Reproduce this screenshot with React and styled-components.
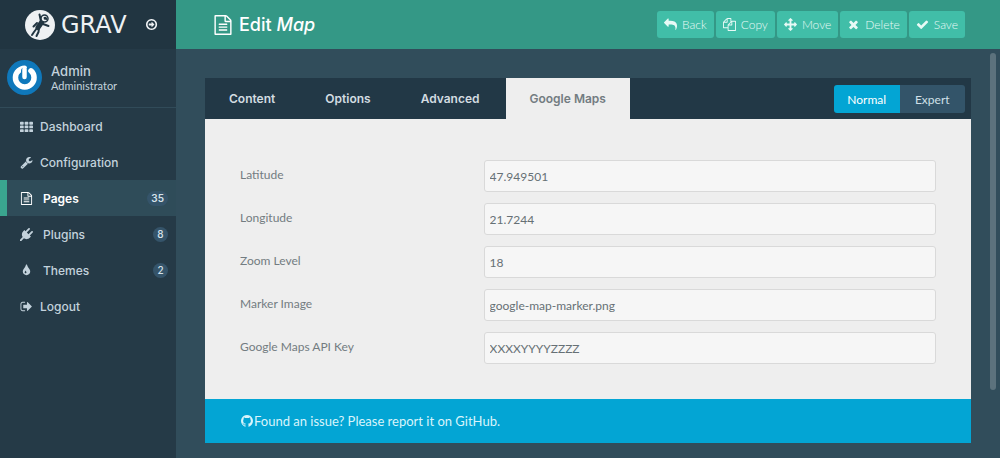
import React from "react";
import styled, { createGlobalStyle, css } from "styled-components";

const display = `Inter, "Open Sans", sans-serif`;
const body = `Lato, "Open Sans", sans-serif`;

const GlobalStyle = createGlobalStyle`
  *, *::before, *::after { box-sizing: border-box; }
  html, body { margin: 0; }
  body { background: #314d5b; font-family: ${body}; font-size: 13px; }
  button, input { font: inherit; }
`;

const paths = {
  th: "M96 256h320q96 0 96 96v192q0 96-96 96H96q-96 0-96-96V352q0-96 96-96zm640 0h320q96 0 96 96v192q0 96-96 96H736q-96 0-96-96V352q0-96 96-96zm640 0h320q96 0 96 96v192q0 96-96 96h-320q-96 0-96-96V352q0-96 96-96zM96 768h320q96 0 96 96v192q0 96-96 96H96q-96 0-96-96V864q0-96 96-96zm640 0h320q96 0 96 96v192q0 96-96 96H736q-96 0-96-96V864q0-96 96-96zm640 0h320q96 0 96 96v192q0 96-96 96h-320q-96 0-96-96V864q0-96 96-96zM96 1280h320q96 0 96 96v192q0 96-96 96H96q-96 0-96-96v-192q0-96 96-96zm640 0h320q96 0 96 96v192q0 96-96 96H736q-96 0-96-96v-192q0-96 96-96zm640 0h320q96 0 96 96v192q0 96-96 96h-320q-96 0-96-96v-192q0-96 96-96z",
  wrench: "M448 1472q0-26-19-45t-45-19-45 19-19 45 19 45 45 19 45-19 19-45zm644-420l-682 682q-37 37-90 37-52 0-91-37l-106-108q-38-36-38-90 0-53 38-91l681-681q39 98 114.500 173.500t173.500 114.500zm634-435q0 39-23 106-47 134-164.500 217.500t-258.500 83.500q-185 0-316.500-131.500t-131.500-316.500 131.500-316.500 316.500-131.500q58 0 121.500 16.500t107.500 46.500q16 11 16 28t-16 28l-293 169v224l193 107q5-3 79-48.500t135.500-81 70.500-35.500q15 0 23.500 10t8.500 25z",
  file: "M1596 380q28 28 48 76t20 88v1152q0 40-28 68t-68 28h-1344q-40 0-68-28t-28-68v-1600q0-40 28-68t68-28h896q40 0 88 20t76 48zm-444-244v376h376q-10-29-22-41l-313-313q-12-12-41-22zm384 1528v-1024h-416q-40 0-68-28t-28-68v-416h-768v1536h1280zm-1024-864q0-14 9-23t23-9h704q14 0 23 9t9 23v64q0 14-9 23t-23 9h-704q-14 0-23-9t-9-23v-64zm736 224q14 0 23 9t9 23v64q0 14-9 23t-23 9h-704q-14 0-23-9t-9-23v-64q0-14 9-23t23-9h704zm0 256q14 0 23 9t9 23v64q0 14-9 23t-23 9h-704q-14 0-23-9t-9-23v-64q0-14 9-23t23-9h704z",
  plug: "M1755 453q37 38 37 90.500t-37 90.500l-401 400 150 150-160 160q-163 163-389.500 186.500t-411.500-100.500l-362 362h-181v-181l362-362q-124-185-100.500-411.500t186.500-389.500l160-160 150 150 400-401q38-37 91-37t90 37 37 90.500-37 90.500l-400 401 234 234 401-400q38-37 91-37t90 37z",
  tint: "M896 1152q0-36-20-69-1-1-15.500-22.500t-25.500-38-25-44-21-50.500q-4-16-21-16t-21 16q-7 23-21 50.500t-25 44-25.500 38-15.500 22.500q-20 33-20 69 0 53 37.500 90.500t90.500 37.500 90.500-37.500 37.500-90.500zm512-128q0 212-150 362t-362 150-362-150-150-362q0-145 81-275 6-9 62.500-90.500t101-151 99.500-178 83-201.500q9-30 34-47t51-17 51.500 17 33.500 47q28 93 83 201.500t99.500 178 101 151 62.500 90.500q81 127 81 275z",
  signOut: "M704 1440q0 4 1 20t.5 26.500-3 23.500-10 19.500-20.500 6.500h-320q-119 0-203.500-84.500t-84.500-203.500v-704q0-119 84.500-203.500t203.500-84.500h320q13 0 22.500 9.500t9.500 22.500q0 4 1 20t.5 26.500-3 23.500-10 19.500-20.500 6.500h-320q-66 0-113 47t-47 113v704q0 66 47 113t113 47h312l11.500 1 11.500 3 8 5.500 7 9 2 13.500zm928-544q0 26-19 45l-544 544q-19 19-45 19t-45-19-19-45v-288h-448q-26 0-45-19t-19-45v-384q0-26 19-45t45-19h448v-288q0-26 19-45t45-19 45 19l544 544q19 19 19 45z",
  arrowCircle: "M1285 896q0 14-9 23l-320 320q-9 9-23 9-13 0-22.500-9.500t-9.500-22.500v-192h-352q-13 0-22.500-9.500t-9.500-22.500v-192q0-13 9.500-22.500t22.500-9.500h352v-192q0-14 9-23t23-9q12 0 24 10l319 319q9 9 9 23zm160 0q0-148-73-273t-198-198-273-73-273 73-198 198-73 273 73 273 198 198 273 73 273-73 198-198 73-273zm224 0q0 209-103 385.500t-279.500 279.500-385.500 103-385.500-103-279.500-279.500-103-385.500 103-385.500 279.500-279.500 385.500-103 385.500 103 279.500 279.500 103 385.500z",
  doubleLeft: "M1011 1376q0 13-10 23l-50 50q-10 10-23 10t-23-10l-466-466q-10-10-10-23t10-23l466-466q10-10 23-10t23 10l50 50q10 10 10 23t-10 23l-393 393 393 393q10 10 10 23zm384 0q0 13-10 23l-50 50q-10 10-23 10t-23-10l-466-466q-10-10-10-23t10-23l466-466q10-10 23-10t23 10l50 50q10 10 10 23t-10 23l-393 393 393 393q10 10 10 23z",
  reply: "M1792 1120q0 166-127 451-3 7-10.500 23.500t-13.500 29.500-12 23q-12 17-28 17-15 0-23.500-10t-8.500-25q0-9 2.500-26.500t2.500-23.500q5-68 5-123 0-101-17.500-181t-48.500-138.500-80-101-105.500-69.500-133-42.500-154-21.500-175.500-6h-224v256q0 26-19 45t-45 19-45-19l-512-512q-19-19-19-45t19-45l512-512q19-19 45-19t45 19 19 45v256h224q713 0 875 403 53 134 53 333z",
  copy: "M1696 384q40 0 68 28t28 68v1216q0 40-28 68t-68 28h-960q-40 0-68-28t-28-68v-288h-544q-40 0-68-28t-28-68v-672q0-40 20-88t48-76l408-408q28-28 76-48t88-20h416q40 0 68 28t28 68v328q68-40 128-40h416zm-544 213l-299 299h299v-299zm-640-384l-299 299h299v-299zm196 647l316-316v-416h-384v416q0 40-28 68t-68 28h-416v640h512v-256q0-40 20-88t48-76zm956 804v-1152h-384v416q0 40-28 68t-68 28h-416v640h896z",
  move: "M1792 896q0 26-19 45l-256 256q-19 19-45 19t-45-19-19-45v-128h-384v384h128q26 0 45 19t19 45-19 45l-256 256q-19 19-45 19t-45-19l-256-256q-19-19-19-45t19-45 45-19h128v-384h-384v128q0 26-19 45t-45 19-45-19l-256-256q-19-19-19-45t19-45l256-256q19-19 45-19t45 19 19 45v128h384v-384h-128q-26 0-45-19t-19-45 19-45l256-256q19-19 45-19t45 19l256 256q19 19 19 45t-19 45-45 19h-128v384h384v-128q0-26 19-45t45-19 45 19l256 256q19 19 19 45z",
  close: "M1490 1322q0 40-28 68l-136 136q-28 28-68 28t-68-28l-294-294-294 294q-28 28-68 28t-68-28l-136-136q-28-28-28-68t28-68l294-294-294-294q-28-28-28-68t28-68l136-136q28-28 68-28t68 28l294 294 294-294q28-28 68-28t68 28l136 136q28 28 28 68t-28 68l-294 294 294 294q28 28 28 68z",
  check: "M1671 566q0 40-28 68l-724 724-136 136q-28 28-68 28t-68-28l-136-136-362-362q-28-28-28-68t28-68l136-136q28-28 68-28t68 28l294 295 656-657q28-28 68-28t68 28l136 136q28 28 28 68z",
  github: "M896 128q209 0 385.500 103t279.500 279.500 103 385.500q0 251-146.500 451.500t-378.500 277.500q-27 5-40-7t-13-30q0-3 .5-76.500t.5-134.500q0-97-52-142 57-6 102.500-18t94-39 81-66.500 53-105 20.500-150.500q0-119-79-206 37-91-8-204-28-9-81 11t-92 44l-38 24q-93-26-192-26t-192 26q-16-11-42.500-27t-83.500-38.500-85-13.500q-45 113-8 204-79 87-79 206 0 85 20.500 150t52.500 105 80.500 67 94 39 102.500 18q-39 36-49 103-21 10-45 15t-57 5-65.500-21.500-55.500-62.500q-19-32-48.500-52t-49.500-24l-20-3q-21 0-29 4.500t-5 11.500 9 14 13 12l7 5q22 10 43.500 38t31.500 51l10 23q13 38 44 61.500t67 30 69.500 7 55.500-3.500l23-4q0 38 .5 88.500t.5 54.500q0 18-13 30t-40 7q-232-77-378.500-277.500t-146.500-451.500q0-209 103-385.500t279.500-279.500 385.500-103z",
};

const Glyph = styled.svg`
  display: block;
  flex: none;
  width: ${(p) => p.$size}px;
  height: ${(p) => p.$size}px;
  fill: currentColor;
`;

const Icon = ({ name, size = 13 }) => (
  <Glyph $size={size} viewBox="0 0 1792 1792" aria-hidden="true">
    <path d={paths[name]} />
  </Glyph>
);

const Shell = styled.div`
  display: grid;
  grid-template-columns: 176px 1fr;
  min-height: 100vh;
`;

const Sidebar = styled.aside`
  background: #253a47;
  color: #c3d2dc;
`;

const Brand = styled.div`
  position: relative;
  display: flex;
  align-items: center;
  height: 49px;
  padding-left: 25px;
  background: #213541;
  color: #eef1f3;
`;

const Astronaut = styled.svg`
  flex: none;
  width: 30px;
  height: 30px;
`;

const Wordmark = styled.span`
  width: 84px;
  padding-left: 6px;
  font-family: "DejaVu Sans", sans-serif;
  font-size: 24px;
  line-height: 24px;
`;

const BrandLink = styled.a`
  margin-left: 6px;
  color: inherit;
`;

const Collapse = styled.button`
  position: absolute;
  top: 15px;
  left: 176px;
  display: grid;
  place-items: center;
  width: 12px;
  height: 18px;
  padding: 0;
  border: 0;
  border-radius: 0 3px 3px 0;
  background: #213541;
  color: #d5dde2;
`;

const Profile = styled.div`
  display: flex;
  align-items: center;
  gap: 9px;
  height: 59px;
  padding: 0 7px 2px;
  border-bottom: 1px solid #314b59;
`;

const Avatar = styled.svg`
  flex: none;
  width: 35px;
  height: 35px;
`;

const ProfileName = styled.div`
  font-family: ${display};
  font-size: 13px;
  font-weight: 500;
  line-height: 16px;
`;

const ProfileRole = styled.div`
  font-size: 11px;
  line-height: 13px;
`;

const NavItem = styled.a`
  display: flex;
  align-items: center;
  height: 36px;
  padding: 0 8px 0 20px;
  color: inherit;
  font-family: ${display};
  font-size: 12px;
  font-weight: 500;
  text-decoration: none;
  ${(p) => p.$active && css`
    padding-left: 13px;
    border-left: 7px solid #3aa58f;
    background: #2f4c59;
    color: #fff;
    font-weight: 600;
  `}
`;

const NavText = styled.span`
  flex: 1;
  padding-left: ${(p) => (p.$wide ? 10 : 7)}px;
`;

const Badge = styled.span`
  min-width: 15px;
  padding: 0 4px;
  border-radius: 8px;
  background: #35546a;
  color: #d5e2ea;
  font-size: 10px;
  line-height: 15px;
  text-align: center;
`;

const Main = styled.main`
  min-width: 0;
  position: relative;
`;

const TitleBar = styled.header`
  display: flex;
  align-items: center;
  justify-content: space-between;
  height: 49px;
  padding: 0 35px 0 37px;
  background: #349886;
  color: #fff;
`;

const Title = styled.h1`
  display: flex;
  align-items: center;
  gap: 6px;
  margin: 0;
  font-family: ${display};
  font-size: 18px;
  font-weight: 500;
`;

const Actions = styled.div`
  display: flex;
  gap: 2px;
`;

const ActionButton = styled.button`
  display: flex;
  align-items: center;
  gap: 5px;
  height: 27px;
  padding: 0 7px;
  border: 0;
  border-radius: 3px;
  background: #41bea8;
  color: #e8faf6;
  font-size: 12px;
  font-weight: 300;
`;

const Panel = styled.form`
  margin: 29px 29px 15px;
  background: #eee;
`;

const TabBar = styled.div`
  display: flex;
  align-items: center;
  gap: 2px;
  height: 41px;
  padding-right: 6px;
  background: #223846;
`;

const Tab = styled.button`
  height: 41px;
  padding: 0 24px;
  border: 0;
  background: ${(p) => (p.$active ? "#eee" : "transparent")};
  color: ${(p) => (p.$active ? "#737c81" : "#d3dce1")};
  font-family: ${display};
  font-size: 12px;
  font-weight: 600;
`;

const ModeSwitch = styled.div`
  display: grid;
  grid-template-columns: 1fr 1fr;
  width: 131px;
  height: 28px;
  margin-left: auto;
  overflow: hidden;
  border-radius: 3px;
`;

const Mode = styled.button`
  padding: 2px 0 0;
  border: 0;
  background: ${(p) => (p.$active ? "#03a5d4" : "#335469")};
  color: ${(p) => (p.$active ? "#fff" : "#d0e0e8")};
  font-size: 12px;
`;

const Fields = styled.div`
  display: grid;
  gap: 11px;
  padding: 41px 35px 35px;
`;

const Field = styled.div`
  display: grid;
  grid-template-columns: 35% 65%;
  align-items: start;
`;

const Label = styled.label`
  color: #737c81;
  font-size: 12px;
  line-height: 30px;
`;

const Input = styled.input`
  width: 100%;
  height: 32px;
  padding: 1px 5px 0;
  border: 1px solid #d9d9d9;
  border-radius: 3px;
  background: #f6f6f6;
  color: #667075;
  font-size: 12px;
`;

const Notice = styled.a`
  display: flex;
  align-items: center;
  height: 44px;
  padding: 0 35px;
  background: #03a5d4;
  color: #d9f4fb;
  font-size: 13px;
  text-decoration: none;
`;

const ScrollThumb = styled.div`
  position: absolute;
  top: 53px;
  right: 4px;
  bottom: 68px;
  width: 6px;
  border-radius: 3px;
  background: #5c727d;
`;

const nav = [
  { icon: "th", text: "Dashboard" },
  { icon: "wrench", text: "Configuration" },
  { icon: "file", text: "Pages", count: 35, active: true },
  { icon: "plug", text: "Plugins", count: 8 },
  { icon: "tint", text: "Themes", count: 2 },
  { icon: "signOut", text: "Logout" },
];

const actions = [
  ["reply", "Back"],
  ["copy", "Copy"],
  ["move", "Move"],
  ["close", "Delete"],
  ["check", "Save"],
];

const tabs = ["Content", "Options", "Advanced", "Google Maps"];

const fields = [
  { id: "latitude", label: "Latitude", value: "47.949501" },
  { id: "longitude", label: "Longitude", value: "21.7244" },
  { id: "zoom", label: "Zoom Level", value: "18" },
  { id: "marker", label: "Marker Image", value: "google-map-marker.png" },
  { id: "key", label: "Google Maps API Key", value: "XXXXYYYYZZZZ" },
];

export default function App() {
  return (
    <>
      <GlobalStyle />
      <Shell>
        <Sidebar>
          <Brand>
            <Astronaut viewBox="0 0 30 30" aria-hidden="true">
              <circle cx="15" cy="15" r="15" fill="#eef1f3" />
              <g fill="none" stroke="#213541" strokeLinecap="round" strokeLinejoin="round">
                <path d="M14.500 4.500l1.500 7M18 14l5.500 2M12 18l-3 4-2 3M14 18l-.5 4-2 4M12 13l-3.500 3.500" strokeWidth="2" />
                <path d="M16.500 12.500l-3.500 5" strokeWidth="5" />
                <circle cx="19.500" cy="8.500" r="3.500" fill="#eef1f3" strokeWidth="1.500" />
              </g>
              <path d="M18.500 7.500q2-1.500 3.500.5v2l-3-.5z" fill="#213541" />
            </Astronaut>
            <Wordmark>GRAV</Wordmark>
            <BrandLink href="#site" aria-label="View site">
              <Icon name="arrowCircle" />
            </BrandLink>
            <Collapse type="button" aria-label="Collapse sidebar">
              <Icon name="doubleLeft" />
            </Collapse>
          </Brand>
          <Profile>
            <Avatar viewBox="0 0 35 35" aria-hidden="true">
              <circle cx="17.500" cy="17.500" r="17.500" fill="#0f78bb" />
              <path d="M11.500 10.800a9.300 9.300 0 1 0 12.500 0" fill="none" stroke="#fff" strokeWidth="5.500" strokeLinecap="round" />
              <path d="M11.500 10.800q2.500-2.800 6-2.800" fill="none" stroke="#fff" strokeWidth="5" strokeLinecap="round" />
              <path d="M17.500 11v6.500" stroke="#0f78bb" strokeWidth="7" strokeLinecap="round" />
              <path d="M17.500 9v8" stroke="#fff" strokeWidth="4.500" strokeLinecap="round" />
            </Avatar>
            <div>
              <ProfileName>Admin</ProfileName>
              <ProfileRole>Administrator</ProfileRole>
            </div>
          </Profile>
          <nav>
            {nav.map((n) => (
              <NavItem key={n.text} href={`#${n.text.toLowerCase()}`} $active={n.active}>
                <Icon name={n.icon} />
                <NavText $wide={n.count !== undefined}>{n.text}</NavText>
                {n.count !== undefined && <Badge>{n.count}</Badge>}
              </NavItem>
            ))}
          </nav>
        </Sidebar>
        <Main>
          <TitleBar>
            <Title>
              <Icon name="file" size={20} />
              <span>Edit <em>Map</em></span>
            </Title>
            <Actions>
              {actions.map(([icon, text]) => (
                <ActionButton key={text} type="button">
                  <Icon name={icon} />
                  {text}
                </ActionButton>
              ))}
            </Actions>
          </TitleBar>
          <Panel>
            <TabBar>
              {tabs.map((t) => (
                <Tab key={t} type="button" $active={t === "Google Maps"}>{t}</Tab>
              ))}
              <ModeSwitch>
                <Mode type="button" $active>Normal</Mode>
                <Mode type="button">Expert</Mode>
              </ModeSwitch>
            </TabBar>
            <Fields>
              {fields.map((f) => (
                <Field key={f.id}>
                  <Label htmlFor={f.id}>{f.label}</Label>
                  <Input id={f.id} type="text" defaultValue={f.value} />
                </Field>
              ))}
            </Fields>
            <Notice href="#issues">
              <Icon name="github" size={14} />
              Found an issue? Please report it on GitHub.
            </Notice>
          </Panel>
          <ScrollThumb />
        </Main>
      </Shell>
    </>
  );
}
